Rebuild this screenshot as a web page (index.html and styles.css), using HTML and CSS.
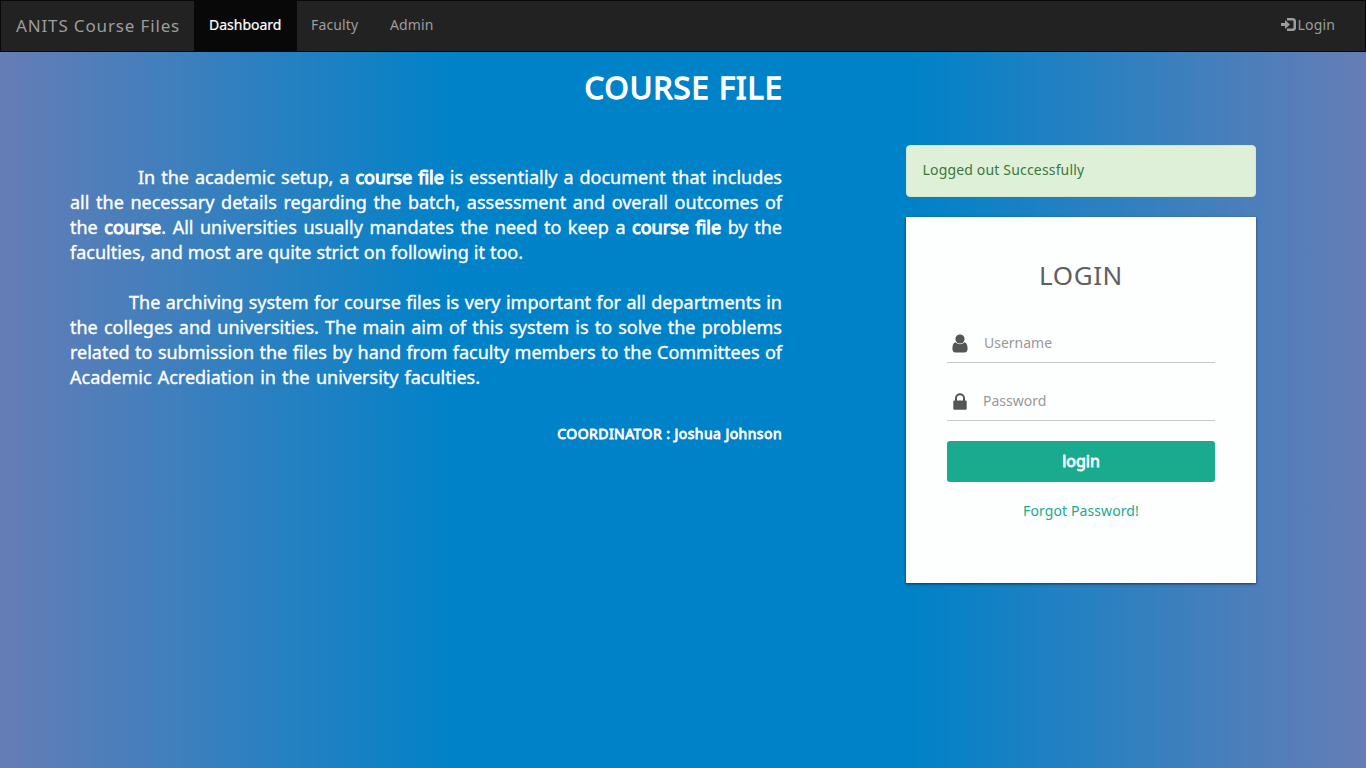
FILE: index.html
```html
<!DOCTYPE html>
<html lang="en">
<head>
<meta charset="utf-8">
<title>ANITS Course Files</title>
<link rel="stylesheet" href="styles.css">
</head>
<body>
<nav class="navbar">
  <a class="brand"><span>ANITS Course Files</span></a>
  <a class="nav-link active"><span>Dashboard</span></a>
  <a class="nav-link faculty"><span>Faculty</span></a>
  <a class="nav-link admin"><span>Admin</span></a>
  <a class="nav-link login-link">
    <svg class="login-icon" viewBox="0 0 15 14"><path d="M0 5h4V2l5 4.500L4 11V8H0z"/><path d="M6 1.250h5.500q2.250 0 2.250 2.250v6q0 2.250-2.250 2.250H6" fill="none" stroke="currentColor" stroke-width="2.500"/></svg><span>Login</span>
  </a>
</nav>
<main class="page">
  <section class="intro">
    <h1><span>COURSE FILE</span></h1>
    <div class="paragraph">
      <p class="line first">In the academic setup, a <b>course file</b> is essentially a document that includes</p>
      <p class="line">all the necessary details regarding the batch, assessment and overall outcomes of</p>
      <p class="line">the <b>course</b>. All universities usually mandates the need to keep a <b>course file</b> by the</p>
      <p class="line end w1">faculties, and most are quite strict on following it too.</p>
    </div>
    <div class="paragraph">
      <p class="line second">The archiving system for course files is very important for all departments in</p>
      <p class="line">the colleges and universities. The main aim of this system is to solve the problems</p>
      <p class="line">related to submission the files by hand from faculty members to the Committees of</p>
      <p class="line end w2">Academic Acrediation in the university faculties.</p>
    </div>
    <p class="coordinator"><span>COORDINATOR : Joshua Johnson</span></p>
  </section>
  <aside class="side">
    <div class="alert"><span>Logged out Successfully</span></div>
    <form class="card">
      <h2><span>LOGIN</span></h2>
      <div class="field">
        <svg class="user-icon" viewBox="0 0 16 19"><circle cx="8" cy="5" r="4.600"/><path d="M3.500 8.200C1.200 8.800.4 11.500.4 15c0 2 1.200 3.400 3 3.400h9.200c1.800 0 3-1.400 3-3.400 0-3.500-.8-6.200-3.100-6.800-2.500 2.600-6.500 2.600-9 0z"/></svg>
        <span class="username">Username</span>
      </div>
      <div class="field">
        <svg class="lock-icon" viewBox="0 0 14 17"><path d="M3 8V5.200a4 4 0 0 1 8 0V8" fill="none" stroke="currentColor" stroke-width="2"/><rect y="7.500" x=".3" width="13.400" height="9.300" rx="1"/></svg>
        <span class="password">Password</span>
      </div>
      <button type="button" class="submit"><span>login</span></button>
      <a class="forgot"><span>Forgot Password!</span></a>
    </form>
  </aside>
</main>
</body>
</html>
```

FILE: styles.css
```css
* { box-sizing: border-box; }
body {
  margin: 0;
  height: 768px;
  overflow: hidden;
  font: 14px/20px "Noto Sans", sans-serif;
  color: #fff;
  background: linear-gradient(to right, #667db6, #0082c8, #0082c8, #667db6);
}
h1, h2, p { margin: 0; font-weight: 400; }
svg { fill: currentColor; display: block; flex: none; }
.navbar {
  display: flex;
  height: 52px;
  border: 1px solid #080808;
  background: #222;
  color: #9d9d9d;
}
.brand {
  width: 193px;
  padding: 15px 0 0 15px;
  font-size: 17px;
  letter-spacing: .85px;
  white-space: nowrap;
}
.nav-link { padding: 14px 15px 0; white-space: nowrap; }
.active { width: 103px; color: #fff; background: #080808; -webkit-text-stroke: .2px #fff; }
.faculty { width: 78px; padding-left: 14px; letter-spacing: .15px; }
.admin { letter-spacing: .1px; }
.login-link { display: flex; gap: 2px; margin-left: auto; padding-right: 30px; letter-spacing: .15px; }
.login-icon { width: 15px; height: 14px; margin-top: 3px; }
.page { display: flex; padding-left: 70px; }
.intro { width: 712px; }
h1 {
  padding-top: 15px;
  height: 113px;
  margin-right: -1px;
  font-size: 31px;
  line-height: 40px;
  letter-spacing: 1px;
  text-align: right;
  -webkit-text-stroke: 1.300px #fff;
}
.paragraph { margin-bottom: 25px; font-size: 18px; line-height: 25px; -webkit-text-stroke: .35px #fff; }
.line { text-align: justify; text-align-last: justify; white-space: nowrap; }
.line b { font-weight: 400; -webkit-text-stroke: 1px #fff; }
.first { padding-left: 68px; }
.second { padding-left: 59px; }
.w1 { width: 453px; }
.w2 { width: 410px; }
.coordinator {
  margin-top: 34px;
  text-align: right;
  font-size: 14px;
  letter-spacing: .45px;
  -webkit-text-stroke: .8px #fff;
}
.side { width: 350px; margin: 93px 0 0 124px; }
.alert {
  height: 52px;
  padding: 14px 15.500px;
  border: 1px solid #d6e9c6;
  border-radius: 4px;
  letter-spacing: .17px;
  color: #3c763d;
  background: #dff0d8;
}
.card {
  height: 366px;
  margin-top: 20px;
  padding: 39px 41px 0;
  color: #555;
  background: #fdfefe;
  box-shadow: 0 1px 3px rgba(0,0,0,.35), 0 1px 2px rgba(0,0,0,.3);
}
h2 { height: 67px; font-size: 26px; line-height: 38px; letter-spacing: .6px; text-align: center; color: #606060; }
.field { display: flex; height: 40px; margin-bottom: 18px; padding-left: 5px; border-bottom: 1px solid #c8caca; color: #999; }
.field span { padding-top: 10px; }
.user-icon { width: 16px; height: 19px; margin: 11px 16px 0 0; color: #555; }
.lock-icon { width: 14px; height: 17px; margin: 12px 16px 0 1px; color: #555; }
.submit {
  display: block;
  width: 268px;
  height: 41px;
  margin-top: 20px;
  padding: 0 0 2px;
  border: 0;
  border-radius: 3px;
  font: 16px/20px "Noto Sans", sans-serif;
  color: #fff;
  background: #1aaa8e;
  -webkit-text-stroke: .8px #fff;
}
.forgot { display: block; margin-top: 19px; text-align: center; letter-spacing: .1px; color: #1aaa8e; }
```
